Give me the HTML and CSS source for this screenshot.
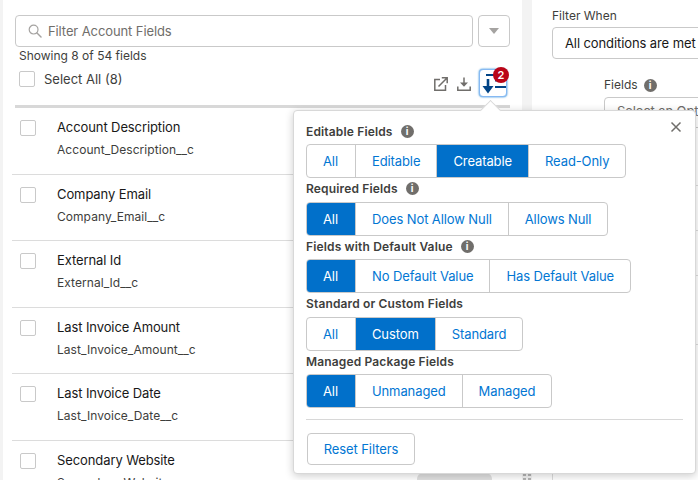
FILE: index.html
```html
<!DOCTYPE html>
<html lang="en">
<head>
    <meta charset="UTF-8">
    <title>Filter Account Fields</title>
    <link rel="stylesheet" href="styles.css">
</head>
<body>
    <div class="page">
        <div class="left-panel">
            <div class="search-row">
                <div class="search-box">
                    <svg class="search-icon" viewBox="0 0 14 14" width="14" height="14"><circle cx="5.600" cy="5.600" r="4.400" fill="none" stroke="#a5a3a1" stroke-width="1.200"/><path d="M9 9l4 4" stroke="#a5a3a1" stroke-width="1.500" stroke-linecap="round"/></svg>
                    <span>Filter Account Fields</span>
                </div>
                <div class="drop-btn"><span class="caret"></span></div>
            </div>
            <div class="showing">Showing 8 of 54 fields</div>
            <div class="select-row">
                <label class="select-all"><span class="check"></span>Select All (8)</label>
                <div class="tools">
                    <svg class="tool" viewBox="0 0 14 14" width="14" height="14"><path d="M6 2.500H.8v10.700h10.700V8" fill="none" stroke="#706e6b" stroke-width="1.500"/><path d="M4.500 9.500L13 1M7.800.8h5.400v5.400" fill="none" stroke="#706e6b" stroke-width="1.500"/></svg>
                    <svg class="tool" viewBox="0 0 14 14" width="14" height="14"><path d="M7 .5v8" fill="none" stroke="#706e6b" stroke-width="1.500"/><path d="M3 5.500h8L7 9.800z" fill="#706e6b"/><path d="M.8 9.500v3.700h12.400V9.500" fill="none" stroke="#706e6b" stroke-width="1.500"/></svg>
                    <div class="filter-btn">
                        <svg viewBox="0 0 26 26" width="26" height="26"><path d="M6 5h8M15 10.500h6M15 17h11" stroke="#014486" stroke-width="2.200" fill="none"/><path d="M8 9v12" stroke="#014486" stroke-width="2.600" fill="none"/><path d="M2.500 16h11L8 23.500z" fill="#014486"/></svg>
                        <span class="badge">2</span>
                    </div>
                </div>
            </div>
            <div class="thick-rule"></div>
            <div class="field-list" id="fields"></div>
        </div>

        <div class="right-panel">
            <div class="right-label">Filter When</div>
            <div class="right-select">All conditions are met</div>
            <div class="right-fields">
                <div class="right-label">Fields <span class="info"></span></div>
                <div class="right-input">Select an Option</div>
                <div class="right-line line-a"></div>
                <div class="right-line line-b"></div>
                <div class="right-line line-b"></div>
                <div class="right-line line-c"></div>
            </div>
        </div>
    </div>

    <div class="pill"></div>
    <svg class="grip" viewBox="0 0 8 7" width="8" height="7"><path d="M0 1h3v2H0zM5 1h3v2H5zM0 5h3v2H0zM5 5h3v2H5z" fill="#b5b5b5"/></svg>
    <div class="foot-rule"></div>

    <div class="popover">
        <span class="arrow"></span>
        <svg class="close" viewBox="0 0 12 12" width="12" height="12"><path d="M1.500 1.500l9 9M10.500 1.500l-9 9" stroke="#706e6b" stroke-width="1.500"/></svg>
        <div id="groups"></div>
        <hr class="pop-rule">
        <button class="reset">Reset Filters</button>
    </div>

    <script>
        const fields = [
            ['Account Description', 'Account_Description__c'],
            ['Company Email', 'Company_Email__c'],
            ['External Id', 'External_Id__c'],
            ['Last Invoice Amount', 'Last_Invoice_Amount__c'],
            ['Last Invoice Date', 'Last_Invoice_Date__c'],
            ['Secondary Website', 'Secondary_Website__c']
        ];
        const list = document.getElementById('fields');
        fields.forEach(f => {
            const row = document.createElement('div');
            row.className = 'field-row';
            row.innerHTML = `
                <span class="check"></span>
                <div>
                    <div class="field-name">${f[0]}</div>
                    <div class="field-api">${f[1]}</div>
                </div>
            `;
            list.appendChild(row);
        });

        // active = index of the selected segment
        const groups = [
            { title: 'Editable Fields', info: true, active: 2, options: ['All', 'Editable', 'Creatable', 'Read-Only'] },
            { title: 'Required Fields', info: true, active: 0, options: ['All', 'Does Not Allow Null', 'Allows Null'] },
            { title: 'Fields with Default Value', info: true, active: 0, options: ['All', 'No Default Value', 'Has Default Value'] },
            { title: 'Standard or Custom Fields', info: false, active: 1, options: ['All', 'Custom', 'Standard'] },
            { title: 'Managed Package Fields', info: false, active: 0, options: ['All', 'Unmanaged', 'Managed'] }
        ];
        const holder = document.getElementById('groups');
        groups.forEach(g => {
            const block = document.createElement('div');
            block.className = 'group';
            const buttons = g.options.map((o, i) =>
                `<span class="seg${i === g.active ? ' active' : ''}">${o}</span>`).join('');
            block.innerHTML = `
                <div class="group-title">${g.title}${g.info ? '<span class="info"></span>' : ''}</div>
                <div class="segs">${buttons}</div>
            `;
            holder.appendChild(block);
        });
    </script>
</body>
</html>
```

FILE: styles.css
```css
* {
    box-sizing: border-box;
}

html, body {
    margin: 0;
    padding: 0;
    height: 480px;
    overflow: hidden;
}

body {
    font-family: Inter, "Liberation Sans", sans-serif;
    font-size: 13px;
    letter-spacing: -0.1px;
    color: #181818;
    background-color: #fff;
    position: relative;
}

.page {
    display: flex;
    height: 480px;
    background-color: #f3f3f3;
    padding-left: 3px;
}

.left-panel {
    width: 519px;
    height: 480px;
    overflow: hidden;
    background-color: #fff;
    padding: 15px 12px 0 9px;
}

.search-row {
    display: flex;
    gap: 5px;
    margin-left: 3px;
}

.search-box {
    flex: 1;
    height: 32px;
    border: 1px solid #c9c9c9;
    border-radius: 4px;
    display: flex;
    align-items: center;
    padding-left: 12px;
    gap: 6px;
    color: #706e6b;
}

.drop-btn {
    width: 32px;
    height: 32px;
    border: 1px solid #c9c9c9;
    border-radius: 4px;
    display: flex;
    align-items: center;
    justify-content: center;
}

.caret {
    width: 0;
    height: 0;
    border-left: 5px solid transparent;
    border-right: 5px solid transparent;
    border-top: 6px solid #a5a3a1;
}

.showing {
    margin-left: 7px;
    height: 18px;
    line-height: 18px;
    font-size: 12px;
    letter-spacing: 0;
    color: #3e3e3c;
}

.select-row {
    display: flex;
    justify-content: space-between;
    margin-left: 7px;
    height: 36px;
    margin-top: 4px;
}

.select-all {
    display: flex;
    gap: 9px;
    height: 18px;
    line-height: 16px;
    margin-top: 2px;
    letter-spacing: 0;
    color: #3e3e3c;
}

.check {
    display: block;
    width: 16px;
    height: 16px;
    flex: none;
    border: 1px solid #c9c9c9;
    border-radius: 2px;
    background-color: #fff;
}

.tools {
    display: flex;
    align-items: center;
    gap: 9px;
    height: 28px;
    margin-right: 3px;
}

.tool {
    margin-top: 1px;
}

.filter-btn {
    width: 28px;
    height: 28px;
    margin-left: -1px;
    position: relative;
    border: 1px solid #86b9f3;
    border-radius: 4px;
    box-shadow: 0 0 2px #0176d3;
    background-color: #fff;
}

.filter-btn svg {
    display: block;
}

.badge {
    position: absolute;
    top: -3px;
    right: -3px;
    width: 16px;
    height: 16px;
    border-radius: 50%;
    background-color: #ba0517;
    color: #fff;
    font-size: 11px;
    font-weight: 600;
    line-height: 16px;
    text-align: center;
}

.thick-rule {
    height: 3px;
    margin-left: 3px;
    background-color: #d8d8d8;
}

.field-row {
    height: 66.500px;
    display: flex;
    gap: 21px;
    border-bottom: 1px solid #dcdcdc;
    padding: 12px 0 0 8px;
}

.field-name {
    color: #181818;
    line-height: 14px;
}

.field-api {
    margin-top: 9px;
    font-size: 12px;
    letter-spacing: 0.05px;
    line-height: 14px;
    color: #3e3e3c;
}

.right-panel {
    flex: 1;
    margin-left: 10px;
    padding: 9px 0 0 20px;
    background-color: #fff;
    overflow: hidden;
    white-space: nowrap;
}

.right-label {
    font-size: 12px;
    line-height: 14px;
    letter-spacing: 0;
    color: #3e3e3c;
    display: flex;
    align-items: center;
    gap: 6px;
}

.right-select {
    margin-top: 4px;
    width: 180px;
    height: 32px;
    border: 1px solid #c9c9c9;
    border-radius: 4px;
    padding-left: 12px;
    line-height: 30px;
}

.right-fields {
    margin: 19px 0 0 52px;
}

.right-input {
    margin-top: 5px;
    width: 140px;
    height: 31px;
    border: 1px solid #c9c9c9;
    border-radius: 4px;
    padding-left: 12px;
    line-height: 26px;
    color: #706e6b;
}

.right-line {
    border-bottom: 1px solid #dcdcdc;
}

.line-a {
    height: 58px;
}

.line-b {
    height: 45px;
}

.line-c {
    height: 69px;
}

.info {
    display: inline-block;
    width: 13px;
    height: 13px;
    border-radius: 50%;
    background-color: #706e6b;
    position: relative;
    flex: none;
}

.info::after {
    content: "i";
    position: absolute;
    inset: 0;
    color: #fff;
    font-size: 10px;
    font-weight: 700;
    line-height: 13px;
    text-align: center;
}

/* bits that peek out under the popover */
.pill {
    position: absolute;
    left: 417px;
    top: 473px;
    width: 75px;
    height: 10px;
    border-radius: 6px 6px 0 0;
    background-color: #e0e0e0;
}

.grip {
    position: absolute;
    left: 523px;
    top: 473px;
}

.foot-rule {
    position: absolute;
    left: 552px;
    top: 470px;
    height: 10px;
    border-left: 1px solid #dcdcdc;
}

.popover {
    position: absolute;
    left: 293px;
    top: 110px;
    width: 403px;
    height: 364px;
    background-color: #fff;
    border: 1px solid #d8d8d8;
    border-radius: 4px;
    box-shadow: 0 2px 8px rgba(0, 0, 0, 0.2);
    padding: 11px 12px 0;
}

.arrow {
    position: absolute;
    left: 189px;
    top: -8px;
    width: 15px;
    height: 15px;
    transform: rotate(45deg);
    background-color: #fff;
    border-top: 1px solid #d8d8d8;
    border-left: 1px solid #d8d8d8;
}

.close {
    position: absolute;
    top: 10px;
    right: 13px;
}

.group {
    height: 57.500px;
}

.group-title {
    display: flex;
    align-items: center;
    gap: 8px;
    height: 18px;
    font-weight: 600;
    font-size: 12px;
    letter-spacing: 0.15px;
    color: #3e3e3c;
    margin-bottom: 4px;
}

.segs {
    display: inline-flex;
    height: 34px;
    border: 1px solid #c9c9c9;
    border-radius: 4px;
    overflow: hidden;
}

.seg {
    padding: 0 16px;
    line-height: 32px;
    color: #0176d3;
    border-left: 1px solid #c9c9c9;
    white-space: nowrap;
}

.seg:first-child {
    border-left: 0;
    padding-right: 17px;
}

.seg.active {
    background-color: #0170ca;
    color: #fff;
}

.pop-rule {
    border: 0;
    border-top: 1px solid #d8d8d8;
    margin: 9px 0 13px;
}

.reset {
    display: block;
    margin-left: 1px;
    width: 108px;
    height: 32px;
    background-color: #fff;
    border: 1px solid #c9c9c9;
    border-radius: 4px;
    color: #0176d3;
    font-family: inherit;
    font-size: 13px;
    letter-spacing: -0.1px;
}
```
